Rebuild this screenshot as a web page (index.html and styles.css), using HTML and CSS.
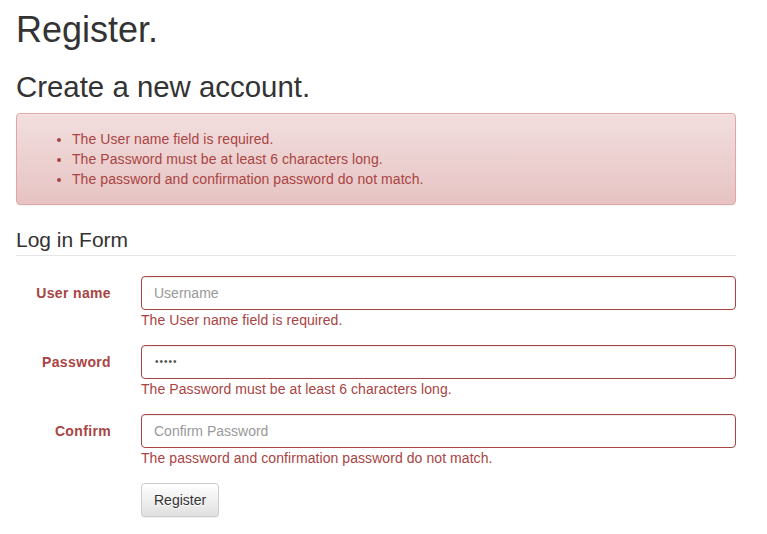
FILE: index.html
```html
<!DOCTYPE html>
<html>
<head>
<meta charset="utf-8">
<title>Register</title>
<link rel="stylesheet" href="styles.css">
</head>
<body>
<div class="container">
  <h1 class="title">Register.</h1>
  <h2 class="subtitle">Create a new account.</h2>
  <div class="alert alert-danger">
    <ul>
      <li>The User name field is required.</li>
      <li>The Password must be at least 6 characters long.</li>
      <li>The password and confirmation password do not match.</li>
    </ul>
  </div>
  <form class="form-horizontal">
    <fieldset class="fieldset">
      <legend class="legend">Log in Form</legend>
      <div class="form-group">
        <label class="control-label" for="u">User name</label>
        <div class="field">
          <input class="form-control" id="u" type="text" placeholder="Username">
          <span class="field-error">The User name field is required.</span>
        </div>
      </div>
      <div class="form-group">
        <label class="control-label" for="p">Password</label>
        <div class="field">
          <input class="form-control pw" id="p" type="password" value="12345">
          <span class="field-error">The Password must be at least 6 characters long.</span>
        </div>
      </div>
      <div class="form-group">
        <label class="control-label" for="c">Confirm</label>
        <div class="field">
          <input class="form-control" id="c" type="password" placeholder="Confirm Password">
          <span class="field-error">The password and confirmation password do not match.</span>
        </div>
      </div>
      <div class="form-group">
        <div class="control-label"></div>
        <div class="field">
          <button type="button" class="btn">Register</button>
        </div>
      </div>
    </fieldset>
  </form>
</div>
</body>
</html>
```
FILE: styles.css
```css
* { box-sizing: border-box; }
html, body { margin: 0; padding: 0; background: #fff; }
body {
  font-family: "Liberation Sans", Arial, Helvetica, sans-serif;
  font-size: 14px;
  line-height: 20px;
  color: #333;
}
.container {
  width: 752px;
  padding: 0 16px;
}
.title {
  font-size: 36px;
  font-weight: 500;
  line-height: 1.1;
  margin: 10px 0 10px;
}
.subtitle {
  font-size: 29.4px;
  font-weight: 500;
  line-height: 33px;
  margin: 20px 0 10px;
}
.alert {
  padding: 15px;
  margin-bottom: 20px;
  border: 1px solid #dca7a7;
  border-radius: 4px;
  color: #a94442;
  background-image: linear-gradient(to bottom, #f2dede 0%, #e7c3c3 100%);
  box-shadow: inset 0 1px 0 rgba(255,255,255,.25), 0 1px 2px rgba(0,0,0,.05);
  letter-spacing: 0.07px;
}
.alert ul {
  margin: 0;
  padding-left: 40px;
}
.fieldset {
  border: 0;
  margin: 0;
  padding: 0;
  min-width: 0;
}
.legend {
  display: block;
  width: 100%;
  padding: 0;
  margin-bottom: 20px;
  font-size: 21px;
  line-height: 30px;
  color: #333;
  border: 0;
  border-bottom: 1px solid #e5e5e5;
}
.form-group {
  display: flex;
  margin-bottom: 15px;
}
.control-label {
  flex: 0 0 95px;
  padding-top: 7px;
  text-align: right;
  font-weight: bold;
  color: #a94442;
  letter-spacing: 0.35px;
}
.field {
  flex: 1;
  margin-left: 30px;
  display: flex;
  flex-direction: column;
  align-items: flex-start;
}
.form-control {
  display: block;
  width: 100%;
  height: 34px;
  padding: 6px 12px;
  font-family: inherit;
  font-size: 14px;
  line-height: 20px;
  color: #555;
  background: #fff;
  border: 1px solid #a94442;
  border-radius: 4px;
  box-shadow: inset 0 1px 1px rgba(0,0,0,.075);
  outline: none;
}
.form-control.pw {
  font-size: 10px;
  letter-spacing: 1px;
  padding-left: 13px;
}
.form-control::placeholder { color: #999; }
.field-error {
  color: #a94442;
  line-height: 20px;
  letter-spacing: 0.07px;
}
.btn {
  display: inline-block;
  height: 34px;
  padding: 6px 12px;
  font-family: inherit;
  font-size: 14px;
  line-height: 20px;
  color: #333;
  border: 1px solid #ccc;
  border-radius: 4px;
  background-image: linear-gradient(to bottom, #fff 0%, #e0e0e0 100%);
  text-shadow: 0 1px 0 #fff;
  box-shadow: inset 0 1px 0 rgba(255,255,255,.15), 0 1px 1px rgba(0,0,0,.075);
  cursor: pointer;
}
```
